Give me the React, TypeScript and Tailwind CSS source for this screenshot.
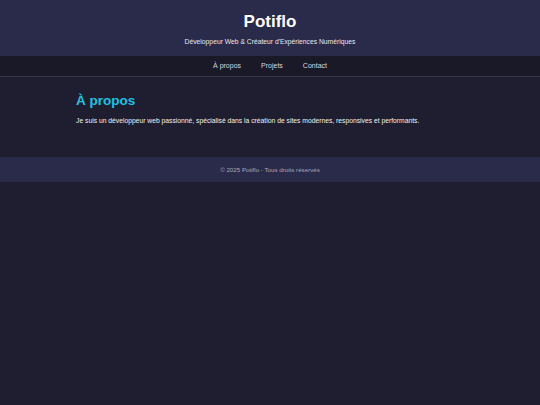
export default function App() {
  return (
    <div className="min-h-[405px] bg-[#1e1e30] font-['Liberation_Sans',Arial,sans-serif] text-[#e0e0e0]">
      {/* Header */}
      <header className="flex h-14 flex-col items-center bg-[#2a2a4a] pt-[11px] text-white">
        <h1 className="text-[17px] font-bold leading-[22px]">Potiflo</h1>
        <p className="mt-[4px] text-[6.75px] leading-[9px] text-[#e6e6ee]">
          Développeur Web &amp; Créateur d'Expériences Numériques
        </p>
      </header>

      {/* Nav */}
      <nav className="flex h-[21px] items-center justify-center gap-[20px] border-b border-[#34344a] bg-[#191928] text-[7px] text-[#d8d8e0]">
        <a href="#about">À propos</a>
        <a href="#projets">Projets</a>
        <a href="#contact">Contact</a>
      </nav>

      {/* Main */}
      <main className="mx-auto max-w-[388px] pt-[15px] pb-[31px]">
        <h2 className="text-[13.5px] font-bold leading-[18px] text-[#1fc3e0]">À propos</h2>
        <p className="mt-[6px] text-[6.75px] leading-[10px] text-[#f0f0f0]">
          Je suis un développeur web passionné, spécialisé dans la création de sites modernes, responsives et performants.
        </p>
      </main>

      {/* Footer */}
      <footer className="flex h-[25px] items-center justify-center bg-[#2a2a4a] text-[6.2px] text-[#a8a8b8]">
        © 2025 Potiflo - Tous droits réservés
      </footer>
    </div>
  );
}
